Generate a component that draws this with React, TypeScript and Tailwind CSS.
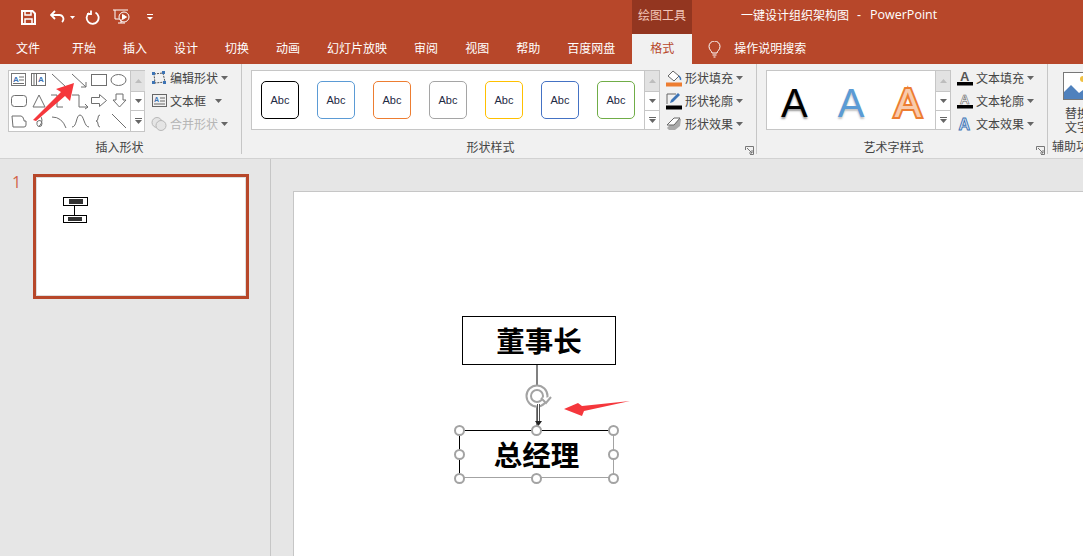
import React from "react";

const Caret = ({ className = "" }: { className?: string }) => (
  <svg width="7" height="4" viewBox="0 0 7 4" className={className}><path d="M0 0h7L3.500 4z" fill="#666" /></svg>
);

const Scroll = () => (
  <div className="flex w-[15px] shrink-0 flex-col border-l border-[#c6c6c6]">
    <div className="flex h-[21px] items-center justify-center border-b border-[#c6c6c6] bg-[#e2e2e2]">
      <svg width="7" height="4" viewBox="0 0 7 4"><path d="M3.500 0L7 4H0z" fill="#bdbdbd" /></svg>
    </div>
    <div className="flex h-[19px] items-center justify-center border-b border-[#c6c6c6]">
      <Caret />
    </div>
    <div className="flex flex-1 flex-col items-center justify-center gap-[1px]">
      <div className="h-px w-[7px] bg-[#666]" />
      <Caret />
    </div>
  </div>
);

const CmdRow = ({ icon, label, disabled, caretGap = "ml-[3px]" }: { icon: React.ReactNode; label: string; disabled?: boolean; caretGap?: string }) => (
  <div className={`flex h-[23px] items-center ${disabled ? "text-[#b5b5b5]" : "text-[#444]"}`}>
    <div className="mr-[3px] flex h-[18px] w-4 shrink-0 items-center justify-center">{icon}</div>
    <span className="text-[12px] leading-none">{label}</span>
    <Caret className={caretGap} />
  </div>
);

const Launcher = () => (
  <svg width="9" height="9" viewBox="0 0 9 9" className="absolute bottom-[-1px] right-[2px]" fill="none" stroke="#777">
    <path d="M.5 4V.5h8v8H5" />
    <path d="M2 2l5 5M7 4v3H4" />
  </svg>
);

const GroupLabel = ({ children }: { children: React.ReactNode }) => (
  <div className="absolute bottom-[-1px] left-0 right-0 text-center text-[12px] leading-[16px] text-[#444]">{children}</div>
);

const ShapesGrid = () => (
  <svg width="121" height="60" viewBox="0 0 121 60" fill="none" stroke="#6f6f6f" strokeWidth="1">
    <rect x="2.500" y="2.500" width="14" height="12" stroke="#777" />
    <text x="4" y="11" fontSize="8" fontWeight="700" fill="#3d74b5" stroke="none" fontFamily="Liberation Sans">A</text>
    <path d="M10 6h5M10 9h5M4 12.500h11" />
    <rect x="22.500" y="2.500" width="14" height="12" />
    <path d="M25 3v11M27.500 3v11" />
    <text x="29" y="11" fontSize="8" fontWeight="700" fill="#3d74b5" stroke="none" fontFamily="Liberation Sans">A</text>
    <path d="M43 3l14 13" />
    <path d="M63 3l14 13M77 11v5h-5" />
    <rect x="82.500" y="3.500" width="15" height="11" />
    <ellipse cx="109.500" cy="9" rx="7.500" ry="5.500" />
    <g transform="translate(0 -2)">
      <rect x="2.500" y="26.500" width="15" height="11" rx="3" />
      <path d="M30 26l6 12H24z" />
      <path d="M42 26h6v12h6" />
      <path d="M63 26h7v12h9M76 35l3 3-3 2" />
      <path d="M82.500 28.500h8v-3l7 6-7 6v-3h-8z" />
      <path d="M107 25h7v6h3l-6.500 7-6.500-7h3z" />
    </g>
    <g transform="translate(0 -2)">
      <path d="M3 47h9q2 0 3 4v1h2v4q0 2-2 2H4z" />
      <path d="M30 46q3 2 3 5t-2 5.500-3-1 2-4 3 3-3 3" />
      <path d="M43 48q10 0 14 11" />
      <path d="M63 58c5 0 4-12 8-12s4 12 9 12" />
      <path d="M91 46q-2 0-2 3 0 3-2 3 2 0 2 3t2 3" />
      <path d="M103 45l14 14" />
    </g>
  </svg>
);

const Handle = ({ x, y }: { x: number; y: number }) => (
  <div className="absolute h-[11px] w-[11px] rounded-full border-2 border-[#a3a3a3] bg-white" style={{ left: x - 5, top: y - 5 }} />
);

const tabs = ["文件", "开始", "插入", "设计", "切换", "动画", "幻灯片放映", "审阅", "视图", "帮助", "百度网盘"];
const styles = ["border-black", "border-[#5b9bd5]", "border-[#ed7d31]", "border-[#a5a5a5]", "border-[#ffc000]", "border-[#4472c4]", "border-[#70ad47]"];

export default function App() {
  return (
    <div className="relative flex h-[556px] w-[1083px] flex-col overflow-hidden bg-[#e6e6e6] font-['Noto_Sans_CJK_SC','Liberation_Sans',sans-serif]">
      {/* title row */}
      <div className="flex h-[34px] shrink-0 bg-[#b7472a] text-white">
        <div className="flex w-[632px] items-center pl-[21px]">
          <svg width="15" height="15" viewBox="0 0 15 15" fill="none" stroke="#fff" strokeWidth="2"><path d="M1 1h10.500L14 3.500V14H1z" /><path d="M4 1v4h6V1" strokeWidth="1.500" /><path d="M4 14V9h7v5" strokeWidth="1.500" /></svg>
          <svg width="15" height="14" viewBox="0 0 15 14" fill="none" stroke="#fff" strokeWidth="1.800" className="ml-[14px]"><path d="M5 1L1 5l4 4" /><path d="M1.500 5H9a4 4 0 0 1 3 7" /></svg>
          <svg width="5" height="3" viewBox="0 0 5 3" className="ml-[5px]"><path d="M0 0h5L2.500 3z" fill="#fff" /></svg>
          <svg width="15" height="15" viewBox="0 0 15 15" fill="none" stroke="#fff" strokeWidth="1.800" className="ml-[10px]"><path d="M4 3a6 6 0 1 0 6.500-.5" /><path d="M6 0.500V4H2" /></svg>
          <svg width="18" height="16" viewBox="0 0 18 16" fill="none" stroke="#fff" strokeWidth="1" className="ml-[13px]"><path d="M0 1h15M2 1v9h4M5 14h7" /><circle cx="11" cy="8" r="5" /><path d="M9.500 5.500l4 2.500-4 2.500z" fill="#fff" /><path d="M8 10v4" /></svg>
          <svg width="6" height="6" viewBox="0 0 6 6" className="ml-[16px]"><path d="M0 0h6v1H0zM0 3h6L3 6z" fill="#fff" /></svg>
        </div>
        <div className="flex w-[60px] items-center justify-center bg-[#933620] pb-[4px] text-[12px] text-[#f2c6b8]">绘图工具</div>
        <div className="flex items-center pb-[4px] pl-[49px] text-[12px] text-white">
          <span>一键设计组织架构图</span>
          <span className="ml-[8px] font-['Liberation_Sans']">-</span>
          <span className="ml-[9px] font-['Open_Sans'] text-[12.500px]">PowerPoint</span>
        </div>
      </div>
      {/* tab row */}
      <div className="flex h-[30px] shrink-0 items-center bg-[#b7472a] pl-[16px] text-[12px] text-white">
        <div className="flex items-center gap-[27px] pb-[3px]">
          {tabs.map((t, i) => (
            <span key={t} className={i === 1 ? "ml-[5px]" : ""}>{t}</span>
          ))}
        </div>
        <div className="ml-[17px] flex h-full w-[60px] items-center justify-center bg-[#f1f1f1] pb-[3px] text-[#b7472a]">格式</div>
        <svg width="13" height="17" viewBox="0 0 13 17" fill="none" stroke="#fff" className="ml-[16px]"><path d="M4 12c0-2-3-3-3-6.500a5.500 5.500 0 0 1 11 0C12 9 9 10 9 12zM4.500 14h4M5.500 16h2" /></svg>
        <span className="ml-[13px] pb-[3px]">操作说明搜索</span>
      </div>
      {/* ribbon */}
      <div className="flex h-[95px] shrink-0 border-b border-[#d2d2d2] bg-[#f1f1f1]">
        {/* group 1 */}
        <div className="relative flex h-[90px] w-[242px] shrink-0 gap-[6px] border-r border-[#c6c6c6] pl-[8px] pt-[6px]">
          <div className="flex h-[62px] w-[137px] border border-[#c6c6c6] bg-white">
            <div className="w-[121px]"><ShapesGrid /></div>
            <Scroll />
          </div>
          <div className="mt-[-4px] flex flex-col">
            <CmdRow label="编辑形状" icon={
              <svg width="16" height="14" viewBox="0 0 16 14" fill="none"><path d="M3 3l9-1 2 9-10 1z" stroke="#555" strokeDasharray="2 1" /><g fill="#3d74b5"><rect x="1" y="1" width="3" height="3" /><rect x="11" y="0" width="3" height="3" /><rect x="1" y="10" width="3" height="3" /><rect x="12" y="10" width="3" height="3" /></g></svg>
            } />
            <CmdRow label="文本框" caretGap="ml-[9px]" icon={
              <svg width="15" height="13" viewBox="0 0 15 13" fill="none" stroke="#666"><rect x=".5" y=".5" width="14" height="12" /><text x="2" y="8" fontSize="7" fontWeight="700" fill="#3d74b5" stroke="none" fontFamily="Liberation Sans">A</text><path d="M8 4h5M8 7h5M2 10h11" /></svg>
            } />
            <CmdRow label="合并形状" disabled icon={
              <svg width="16" height="16" viewBox="0 0 16 16" fill="#e5e5e5" stroke="#b8b8b8"><circle cx="6" cy="6.500" r="5" /><circle cx="10" cy="9.500" r="5" /></svg>
            } />
          </div>
          <GroupLabel><span className="pr-[2px]">插入形状</span></GroupLabel>
        </div>
        {/* group 2 */}
        <div className="relative flex h-[90px] w-[515px] shrink-0 gap-[6px] border-r border-[#c6c6c6] pl-[9px] pt-[6px]">
          <div className="flex h-[60px] w-[409px] border border-[#c6c6c6] bg-white">
            <div className="flex flex-1 items-start gap-[18px] pl-[9px] pt-[10px]">
              {styles.map((s) => (
                <div key={s} className={`flex h-[38px] w-[38px] items-center justify-center rounded-[5px] border ${s} font-['Liberation_Sans'] text-[11px] text-[#1f2a44]`}>Abc</div>
              ))}
            </div>
            <Scroll />
          </div>
          <div className="mt-[-4px] flex flex-col">
            <CmdRow label="形状填充" icon={
              <svg width="16" height="18" viewBox="0 0 16 18" fill="none"><path d="M2 7l5-5 6 5-5 5z" fill="#fff" stroke="#666" /><path d="M13 7q2 2 1.500 4" stroke="#3d74b5" strokeWidth="1.500" /><rect y="13.500" width="16" height="4" fill="#ed7d31" /></svg>
            } />
            <CmdRow label="形状轮廓" icon={
              <svg width="16" height="18" viewBox="0 0 16 18" fill="none"><path d="M1 12V2h9" stroke="#666" /><path d="M4 11l1-3 7-7 2 2-7 7z" fill="#3d74b5" /><rect y="13.500" width="16" height="4" fill="#000" /></svg>
            } />
            <CmdRow label="形状效果" icon={
              <svg width="16" height="14" viewBox="0 0 16 14"><path d="M1 11L9 2h6l-1 7-5 4H3z" fill="#aaa" /><path d="M1 8l7-7h6l-6 7z" fill="#fff" stroke="#666" /></svg>
            } />
          </div>
          <GroupLabel><span className="pr-[17px]">形状样式</span></GroupLabel>
          <Launcher />
        </div>
        {/* group 3 */}
        <div className="relative flex h-[90px] w-[291px] shrink-0 gap-[6px] border-r border-[#c6c6c6] pl-[9px] pt-[6px]">
          <div className="flex h-[60px] w-[185px] border border-[#c6c6c6] bg-white">
            <div className="flex flex-1 items-center gap-[30px] pl-[14px] pt-[5px] font-['Liberation_Sans'] text-[40px] leading-none">
              <span className="text-black [text-shadow:0_2px_2px_#999]">A</span>
              <span className="text-[#5b9bd5] [text-shadow:0_2px_2px_#c4c4c4]">A</span>
              <span className="text-[#f8cbad] [-webkit-text-stroke:4px_#ed7d31] [paint-order:stroke_fill]">A</span>
            </div>
            <Scroll />
          </div>
          <div className="mt-[-4px] flex flex-col">
            <CmdRow label="文本填充" icon={
              <svg width="16" height="16" viewBox="0 0 16 16"><text x="3" y="11" fontSize="13" fontWeight="700" fill="#555" fontFamily="Liberation Sans">A</text><rect y="12" width="16" height="3.500" fill="#000" /></svg>
            } />
            <CmdRow label="文本轮廓" icon={
              <svg width="16" height="16" viewBox="0 0 16 16"><text x="3" y="11" fontSize="13" fontWeight="700" fill="#fff" stroke="#666" strokeWidth=".6" fontFamily="Liberation Sans">A</text><rect y="12" width="16" height="3.500" fill="#000" /></svg>
            } />
            <CmdRow label="文本效果" icon={
              <svg width="16" height="16" viewBox="0 0 16 16"><text x="1.500" y="13.500" fontSize="16" fontWeight="700" fill="#dce8f5" stroke="#3d74b5" strokeWidth=".9" fontFamily="Liberation Sans">A</text></svg>
            } />
          </div>
          <GroupLabel><span className="pr-[17px]">艺术字样式</span></GroupLabel>
          <Launcher />
        </div>
        {/* group 4 */}
        <div className="relative flex-1">
          <div className="ml-[15px] mt-[8px] h-[28px] w-[30px]">
            <svg width="30" height="28" viewBox="0 0 30 28" fill="none"><rect x=".5" y=".5" width="29" height="27" fill="#fff" stroke="#777" /><circle cx="20" cy="7" r="3" fill="#f0c040" /><path d="M1 27V20l7-7 8 8 4-3 9 6v3z" fill="#4f81bd" /></svg>
          </div>
          <div className="mt-[6px] whitespace-nowrap pl-[17px] text-[12px] leading-[14px] text-[#444]">替换<br />文字</div>
          <div className="absolute bottom-[4px] left-[4px] whitespace-nowrap text-[12px] leading-[16px] text-[#444]">辅助功能</div>
        </div>
      </div>
      {/* body */}
      <div className="flex min-h-0 flex-1">
        <div className="flex w-[271px] shrink-0 items-start border-r border-[#c6c6c6] pl-[12px] pt-[15px]">
          <span className="w-[21px] font-['Open_Sans'] text-[16px] leading-[16px] text-[#d2644a]">1</span>
          <div className="h-[125px] w-[216px] border-[3px] border-[#b7472a]">
            <div className="relative h-full border border-[#dedede] bg-white">
              <div className="absolute left-[26px] top-[19px] flex h-[9px] w-[25px] items-center justify-center border border-black bg-white"><div className="h-[5px] w-[14px] bg-[#333]" /></div>
              <div className="absolute left-[37px] top-[28px] h-[9px] w-px bg-black" />
              <div className="absolute left-[26px] top-[37px] flex h-[8px] w-[24px] items-center justify-center border border-black bg-white"><div className="h-[4px] w-[14px] bg-[#333]" /></div>
            </div>
          </div>
        </div>
        <div className="flex-1 pl-[22px] pt-[32px]">
          <div className="relative h-[400px] border-l border-t border-[#c6c6c6] bg-white">
            <div className="absolute left-[168px] top-[124px] flex h-[49px] w-[154px] items-center justify-center border border-black text-[28.500px] font-bold text-black">董事长</div>
            <div className="absolute left-[242px] top-[173px] h-[65px] w-[2px] bg-[#808080]" />
            <div className="absolute left-[165px] top-[238px] flex h-[48px] w-[155px] items-center justify-center border border-b-[#a3a3a3] border-l-black border-r-[#a3a3a3] border-t-black pt-[1px] text-[28.500px] font-bold text-black">总经理</div>
            <svg width="28" height="26" viewBox="0 0 28 26" fill="none" stroke="#a3a3a3" strokeWidth="2" className="absolute left-[231px] top-[191px]"><circle cx="12" cy="13" r="10.500" fill="#fff" /><circle cx="12" cy="13" r="6" /><path d="M16 15l5 5 5-6" fill="#fff" /></svg>
            <div className="absolute left-[243px] top-[212px] h-[20px] w-[3px] border-x border-[#555] bg-white" />
            <svg width="7" height="5" viewBox="0 0 7 5" className="absolute left-[241px] top-[229px]"><path d="M0 0h7L3.500 5z" fill="#222" /></svg>
            <Handle x={165} y={238} /><Handle x={242} y={238} /><Handle x={319} y={238} />
            <Handle x={165} y={262} /><Handle x={319} y={262} />
            <Handle x={165} y={286} /><Handle x={242} y={286} /><Handle x={319} y={286} />
          </div>
        </div>
      </div>
      {/* annotation arrows over the screenshot */}
      <svg className="pointer-events-none absolute left-0 top-0" width="1083" height="556" fill="#f5373c">
        <polygon points="33,120 61,92 56,89 74,83 70,101 65,96 36,121" />
        <polygon points="564,409 578,403 582,406 630,401 584,411 582,416" />
      </svg>
    </div>
  );
}
